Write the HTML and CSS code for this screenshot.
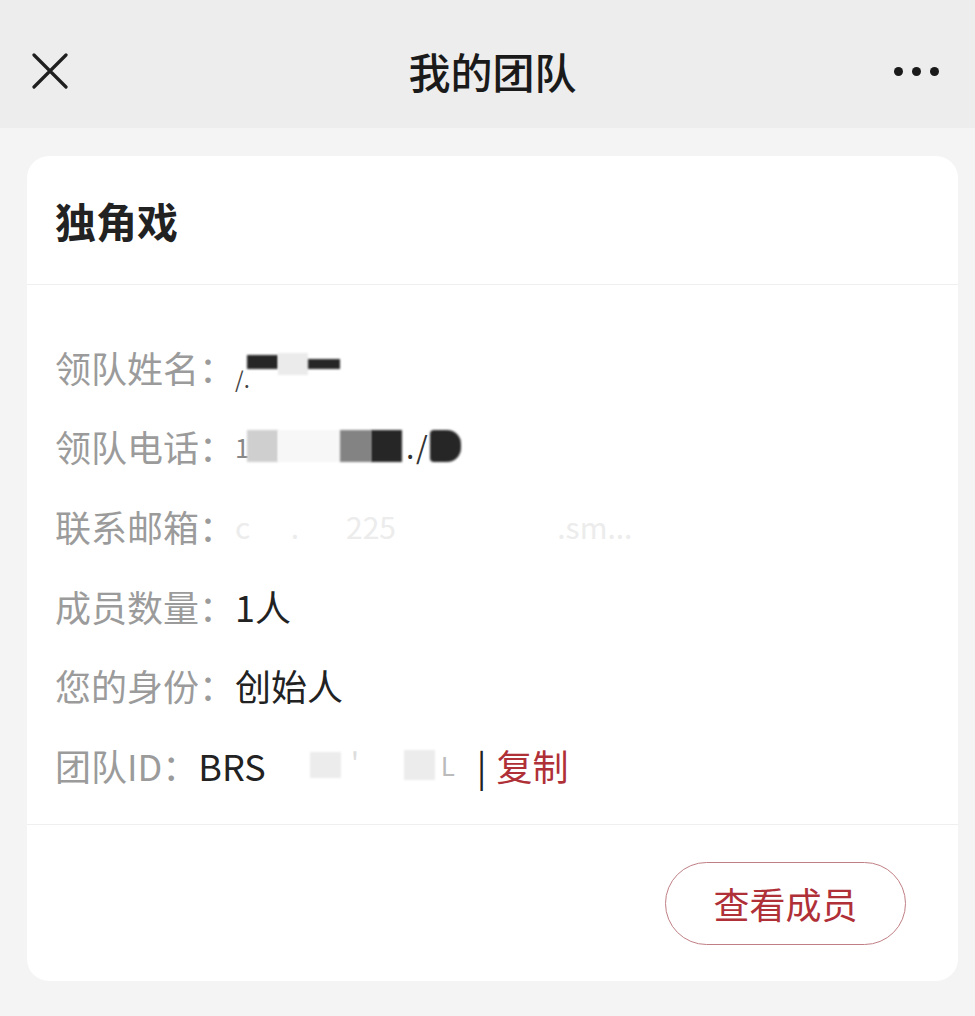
FILE: index.html
```html
<!DOCTYPE html>
<html lang="zh-CN">
<head>
<meta charset="utf-8">
<title>我的团队</title>
<link rel="stylesheet" href="styles.css">
</head>
<body>
<div class="page">
  <header class="nav">
    <div class="nav-left">
      <svg class="icon-close" width="36" height="36" viewBox="0 0 36 36">
        <path d="M2 2 L34 34 M34 2 L2 34" stroke="#1f1f1f" stroke-width="3.2" stroke-linecap="round" fill="none"/>
      </svg>
    </div>
    <div class="nav-title">我的团队</div>
    <div class="nav-right">
      <span class="dot"></span><span class="dot"></span><span class="dot"></span>
    </div>
  </header>

  <main class="card">
    <div class="card-head">独角戏</div>
    <div class="card-body">
      <div class="row">
        <span class="label">领队姓名：</span>
        <span class="value">
          <span class="mark m-slash">/.</span><span class="blk k-black k-short"></span><span class="blk k-light k-mid"></span><span class="blk k-black k-thin"></span>
        </span>
      </div>
      <div class="row">
        <span class="label">领队电话：</span>
        <span class="value">
          <span class="mark m-one">1</span><span class="blk k-silver k-tall"></span><span class="blk k-faint k-wide"></span><span class="blk k-gray k-tall"></span><span class="blk k-black k-tall"></span><span class="mark m-dot">.</span><span class="mark m-sl">/</span><span class="blk k-black k-tall k-round"></span>
        </span>
      </div>
      <div class="row">
        <span class="label">联系邮箱：</span>
        <span class="value faint">c&nbsp;&nbsp;&nbsp;&nbsp;&nbsp;&nbsp;.&nbsp;&nbsp;&nbsp;&nbsp;&nbsp;&nbsp;&nbsp;225&nbsp;&nbsp;&nbsp;&nbsp;&nbsp;&nbsp;&nbsp;&nbsp;&nbsp;&nbsp;&nbsp;&nbsp;&nbsp;&nbsp;&nbsp;&nbsp;&nbsp;&nbsp;&nbsp;&nbsp;&nbsp;&nbsp;&nbsp;&nbsp;.sm...</span>
      </div>
      <div class="row">
        <span class="label">成员数量：</span>
        <span class="value">1人</span>
      </div>
      <div class="row">
        <span class="label">您的身份：</span>
        <span class="value">创始人</span>
      </div>
      <div class="row">
        <span class="label">团队ID：</span>
        <span class="value">BRS<span class="blk k-pale k-id1"></span><span class="mark m-tick">'</span><span class="blk k-pale k-id2"></span><span class="mark m-l">L</span><span class="sep">|</span><a class="copy">复制</a></span>
      </div>
    </div>
    <div class="card-foot">
      <button class="btn-members">查看成员</button>
    </div>
  </main>
</div>
</body>
</html>
```

FILE: styles.css
```css
* { box-sizing: border-box; }
html, body {
  margin: 0;
  padding: 0;
  background: #f4f4f4;
  font-family: "Noto Sans CJK SC", "Noto Sans", sans-serif;
  color: #222;
}
.page {
  width: 975px;
  min-height: 1016px;
  background: #f4f4f4;
  overflow: hidden;
}
.nav {
  height: 128px;
  padding-top: 14px;
  background: #ededed;
  display: grid;
  grid-template-columns: 1fr auto 1fr;
  align-items: center;
}
.nav-left {
  padding-left: 32px;
  display: flex;
  align-items: center;
}
.icon-close { display: block; }
.nav-title {
  font-size: 42px;
  font-weight: 500;
  color: #1a1a1a;
  line-height: 1;
  padding-left: 10px;
}
.nav-right {
  display: flex;
  justify-content: flex-end;
  gap: 9px;
  padding-right: 36px;
}
.dot {
  width: 9px;
  height: 9px;
  border-radius: 50%;
  background: #1a1a1a;
}
.card {
  margin: 28px 17px 0 27px;
  background: #fff;
  border-radius: 22px;
}
.card-head {
  height: 129px;
  padding-left: 28px;
  display: flex;
  align-items: center;
  font-size: 41px;
  font-weight: 700;
  color: #222;
  border-bottom: 1px solid #efefef;
}
.card-body {
  padding: 42px 28px 19px;
  border-bottom: 1px solid #efefef;
}
.row {
  height: 79.6px;
  display: flex;
  align-items: center;
  font-size: 36px;
  white-space: nowrap;
}
.label {
  color: #9b9b9b;
}
.value {
  color: #222;
  display: flex;
  align-items: center;
}
.value.faint {
  color: #ececec;
  font-size: 30px;
}
.blk {
  display: inline-block;
  filter: blur(0.8px);
}
.k-black { background: #262626; }
.k-light { background: #ebebeb; }
.k-silver { background: #cfcfcf; }
.k-gray { background: #838383; }
.k-faint { background: #f7f7f7; }
.k-pale { background: #ececec; }
.k-short { width: 31px; height: 14px; margin-top: -10px; }
.k-mid { width: 30px; height: 22px; margin-top: -6px; }
.k-thin { width: 32px; height: 10px; margin-top: -6px; }
.k-tall { width: 31px; height: 32px; }
.k-wide { width: 62px; height: 32px; }
.k-round { border-radius: 4px 14px 14px 4px; margin-left: 4px; }
.k-id1 { width: 31px; height: 26px; margin-left: 44px; }
.k-id2 { width: 31px; height: 30px; margin-left: 0; }
.mark {
  display: inline-block;
  color: #555;
  font-size: 30px;
}
.m-slash { width: 12px; color: #444; font-size: 22px; margin-top: 22px; }
.m-one { width: 12px; color: #888; font-size: 26px; }
.m-dot { width: 10px; margin-left: 4px; color: #333; }
.m-sl { width: 10px; color: #333; }
.m-tick { width: 63px; color: #ddd; padding-left: 10px; }
.m-l { width: 40px; color: #bbb; font-size: 26px; padding-left: 6px; }
.sep {
  color: #222;
  margin: 0 10px 0 2px;
}
.copy {
  color: #b03038;
}
.card-foot {
  padding: 37px 52px 36px;
  display: flex;
  justify-content: flex-end;
}
.btn-members {
  width: 241px;
  height: 83px;
  border: 1.5px solid #c07f85;
  border-radius: 42px;
  background: #fff;
  color: #b03038;
  font-family: "Noto Sans CJK SC", "Noto Sans", sans-serif;
  font-size: 36px;
  padding: 0;
  line-height: 1;
}
```
